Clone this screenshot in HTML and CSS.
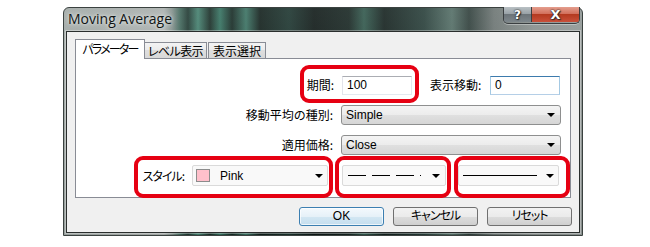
FILE: index.html
```html
<!DOCTYPE html>
<html lang="ja">
<head>
<meta charset="utf-8">
<title>Moving Average</title>
<link rel="stylesheet" href="styles.css">
</head>
<body>
<div class="window">
  <div class="titlebar">
    <span class="title">Moving Average</span>
    <div class="caption-btns">
      <span class="cap cap-help">?</span>
      <span class="cap cap-close">X</span>
    </div>
  </div>
  <div class="client">
    <div class="tabs">
      <span class="tab tab-active">パラメーター</span>
      <span class="tab tab-level">レベル表示</span>
      <span class="tab tab-last">表示選択</span>
    </div>
    <div class="panel">
      <div class="row row-first">
        <span class="label">期間:</span>
        <span class="edit">100</span>
        <div class="pair">
          <span class="label">表示移動:</span>
          <span class="edit edit-focus">0</span>
        </div>
      </div>
      <div class="row">
        <span class="label">移動平均の種別:</span>
        <span class="combo combo-wide"><span class="combo-text">Simple</span><span class="arrow"></span></span>
      </div>
      <div class="row">
        <span class="label">適用価格:</span>
        <span class="combo combo-wide"><span class="combo-text">Close</span><span class="arrow"></span></span>
      </div>
      <div class="row row-style">
        <span class="label kana">スタイル:</span>
        <span class="combo flat combo-color"><span class="swatch"></span><span class="combo-text grow">Pink</span><span class="arrow"></span></span>
        <span class="combo flat combo-dash"><span class="dashes"><i class="d"></i><i class="d"></i><i class="d"></i><i class="dot"></i></span><span class="arrow"></span></span>
        <span class="combo flat combo-width"><span class="solid"></span><span class="arrow"></span></span>
      </div>
      <span class="mark mark-period"></span>
      <span class="mark mark-style"></span>
      <span class="mark mark-dash"></span>
      <span class="mark mark-width"></span>
    </div>
    <div class="buttons">
      <span class="btn btn-default">OK</span>
      <span class="btn kana">キャンセル</span>
      <span class="btn kana">リセット</span>
    </div>
  </div>
</div>
</body>
</html>
```
FILE: styles.css
```css
html, body {
  margin: 0;
  padding: 0;
  background: #ffffff;
}
body {
  width: 650px;
  height: 247px;
  overflow: hidden;
  font-family: "Liberation Sans", "Noto Sans CJK JP", sans-serif;
  font-size: 12px;
  color: #000;
}
.window {
  margin: 7px 0 0 63px;
  width: 520px;
  height: 229px;
  box-sizing: border-box;
  border: 1px solid #3b4240;
  border-radius: 6px 6px 0 0;
  padding: 0 2px 2px 2px;
  display: flex;
  flex-direction: column;
  background:
    linear-gradient(to bottom, rgba(255,255,255,0.12), rgba(0,0,0,0.05)),
    linear-gradient(to right, #9ea6a3 0, #a7adab 100px, #7f8d89 108px, #3d6458 116px, #1a332c 124px, #3f7d6b 134px, #132821 146px, #2f6e5c 156px, #10241e 168px, #356e5e 182px, #0c1a16 196px, #17302a 225px, #0a1412 250px, #12211d 285px, #2c5448 300px, #0f1c19 320px, #233a35 360px, #4f6a62 388px, #2a3a36 405px, #68716f 430px, #858c8a 470px, #8e9593 520px);
}
.titlebar {
  height: 23px;
  display: flex;
  align-items: flex-start;
  flex: none;
}
.title {
  font-family: "Open Sans", "Noto Sans", sans-serif;
  font-size: 14px;
  line-height: 18px;
  margin: 2px 0 0 2px;
  color: #101414;
  text-shadow: 0 0 6px rgba(235,240,238,0.9), 0 0 3px rgba(235,240,238,0.9);
}
.caption-btns {
  margin: -1px 0 0 auto;
  display: flex;
  height: 16px;
  border: 1px solid #3a3e40;
  border-top: none;
  border-radius: 0 0 5px 5px;
  overflow: hidden;
  box-shadow: 0 1px 0 rgba(255,255,255,0.35);
}
.cap {
  display: flex;
  align-items: center;
  justify-content: center;
  height: 15px;
  font-family: "DejaVu Sans", sans-serif;
  font-weight: bold;
  font-size: 12px;
  color: #ffffff;
  text-shadow: 0 0 1px #222, 0 0 2px #222, 1px 1px 1px #333;
}
.cap-help {
  width: 27px;
  border-right: 1px solid #3a3e40;
  background: linear-gradient(to bottom, #b9c0c4 0, #99a2a7 45%, #6c7479 50%, #7d868b 100%);
}
.cap-close {
  width: 47px;
  background: linear-gradient(to bottom, #e49e8e 0, #d2705c 45%, #b43a20 50%, #c9503a 100%);
  font-size: 13px;
}
.client {
  flex: 1;
  background: #f0f0f0;
  border: 1px solid #2a2e2d;
  box-shadow: 0 0 0 1px rgba(255,255,255,0.35);
  padding: 7px 8px 0 8px;
  display: flex;
  flex-direction: column;
}
.tabs {
  display: flex;
  align-items: flex-end;
  height: 19px;
}
.tab {
  font-family: "Noto Sans CJK JP", sans-serif;
  font-feature-settings: "palt";
  font-size: 12px;
  height: 15px;
  line-height: 15px;
  box-sizing: content-box;
  border: 1px solid #898c95;
  border-bottom: none;
  margin-left: -1px;
  background: linear-gradient(to bottom, #f3f3f3 0, #ebebeb 50%, #dedede 50%, #d8d8d8 100%);
  color: #000;
  display: flex;
  justify-content: center;
  white-space: nowrap;
  overflow: hidden;
}
.tab-level {
  width: 61px;
  letter-spacing: -0.6px;
}
.tab-last {
  margin-left: 1px;
  width: 56px;
}
.tab-active {
  position: relative;
  z-index: 1;
  margin-left: 0;
  width: 68px;
  height: 19px;
  line-height: 17px;
  margin-bottom: -1px;
  letter-spacing: -1.8px;
  background: #ffffff;
}
.panel {
  position: relative;
  background: #ffffff;
  border: 1px solid #898c95;
  height: 140px;
  box-sizing: border-box;
  padding: 16px 9px 0 0;
  display: flex;
  flex-direction: column;
  gap: 10px;
}
.row {
  display: flex;
  align-items: center;
  justify-content: flex-end;
  height: 20px;
  gap: 8px;
}
.row-first {
  margin-right: 1px;
}
.pair {
  width: 130px;
  margin-left: 10px;
  display: flex;
  align-items: center;
  justify-content: space-between;
}
.label {
  font-family: "Noto Sans CJK JP", sans-serif;
  font-size: 12px;
  line-height: 16px;
  white-space: nowrap;
}
.kana {
  font-feature-settings: "palt";
  letter-spacing: -1px;
}
.edit {
  width: 70px;
  height: 19px;
  box-sizing: border-box;
  border: 1px solid;
  border-color: #abadb3 #e3e9ef #e3e9ef #e2e3ea;
  background: #ffffff;
  padding-left: 4px;
  line-height: 17px;
}
.edit-focus {
  border-color: #3d7bad #a4c9e3 #b5cfe7 #a4c9e3;
}
.combo {
  height: 20px;
  box-sizing: border-box;
  border: 1px solid #8e8f8f;
  border-radius: 3px;
  background: linear-gradient(to bottom, #f4f4f4 0, #ececec 50%, #e0e0e0 50%, #d6d6d6 100%);
  display: flex;
  align-items: center;
  padding: 0 5px 0 4px;
}
.combo-wide {
  width: 220px;
  justify-content: space-between;
}
.combo-text {
  line-height: 16px;
}
.grow {
  flex: 1;
}
.arrow {
  width: 0;
  height: 0;
  border-left: 4px solid transparent;
  border-right: 4px solid transparent;
  border-top: 4px solid #000;
}
.row-style {
  height: 21px;
  margin-right: 2px;
}
.flat {
  height: 21px;
  border: 1px solid #dadada;
  border-radius: 2px;
  background: #f9f9f9;
}
.combo-color {
  width: 136px;
  margin-right: 6px;
  padding-left: 3px;
  padding-right: 4px;
}
.swatch {
  width: 14px;
  height: 13px;
  box-sizing: border-box;
  border: 1px solid #8c8c8c;
  background: #ffc0cb;
  margin-right: 10px;
}
.combo-dash {
  width: 104px;
  margin-right: 4px;
  padding-left: 5px;
  padding-right: 5px;
  justify-content: space-between;
}
.dashes {
  display: flex;
  align-items: center;
  gap: 6px;
}
.dashes .d {
  display: block;
  width: 18px;
  height: 1px;
  background: #000;
}
.dashes .dot {
  display: block;
  width: 1px;
  height: 1px;
  background: #000;
}
.combo-width {
  width: 101px;
  padding-left: 4px;
  padding-right: 4px;
  justify-content: space-between;
}
.solid {
  display: block;
  width: 74px;
  height: 1px;
  background: #000;
}
.buttons {
  display: flex;
  justify-content: flex-end;
  gap: 9px;
  margin-top: 9px;
  margin-right: -1px;
}
.btn {
  width: 85px;
  height: 19px;
  box-sizing: border-box;
  border: 1px solid #707070;
  border-radius: 3px;
  background: linear-gradient(to bottom, #f2f2f2 0, #ebebeb 50%, #dddddd 50%, #cfcfcf 100%);
  display: flex;
  align-items: center;
  justify-content: center;
  font-family: "Liberation Sans", "Noto Sans CJK JP", sans-serif;
  font-size: 12px;
  line-height: 15px;
}
.btn-default {
  border-color: #3c7fb1;
  background: linear-gradient(to bottom, #f3f9fd 0, #e6f1f8 50%, #d3e7f3 50%, #c5deee 100%);
  box-shadow: inset 0 0 0 1px rgba(255,255,255,0.7);
}
.mark {
  position: absolute;
  box-sizing: border-box;
  border: 4px solid #e60012;
  border-radius: 9px;
  pointer-events: none;
}
.mark-period {
  left: 224px;
  top: 6px;
  width: 119px;
  height: 38px;
}
.mark-style {
  left: 58px;
  top: 97px;
  width: 199px;
  height: 42px;
}
.mark-dash {
  left: 259px;
  top: 97px;
  width: 116px;
  height: 42px;
}
.mark-width {
  left: 378px;
  top: 97px;
  width: 116px;
  height: 42px;
}
```
